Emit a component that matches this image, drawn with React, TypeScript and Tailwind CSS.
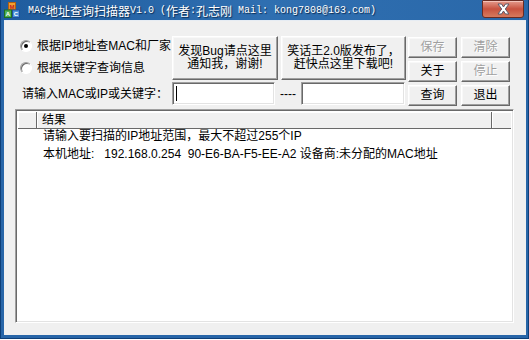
import React from "react";

const CJK = "font-['Liberation_Sans','Noto_Sans_CJK_SC',sans-serif]";

function Btn({
  children,
  className = "",
  disabled = false,
}: {
  children: React.ReactNode;
  className?: string;
  disabled?: boolean;
}) {
  return (
    <div
      className={`bg-[#f0f0f0] border border-t-white border-l-white border-b-[#696969] border-r-[#696969] shadow-[inset_-1px_-1px_0_#a0a0a0,inset_1px_1px_0_#f8f8f8] flex flex-col items-center justify-center text-[12px] leading-[13px] ${
        disabled ? "text-[#a0a0a0] [text-shadow:1px_1px_0_#ffffff]" : "text-black"
      } ${className}`}
    >
      {children}
    </div>
  );
}

function Field({ caret = false, className = "" }: { caret?: boolean; className?: string }) {
  return (
    <div
      className={`h-[23px] bg-white border border-t-[#a0a0a0] border-l-[#a0a0a0] border-b-white border-r-white shadow-[inset_1px_1px_0_#696969,inset_-1px_-1px_0_#e3e3e3] flex items-center pl-[3px] ${className}`}
    >
      {caret && <div className="w-[1px] h-[15px] bg-black" />}
    </div>
  );
}

function Radio({ checked, label }: { checked?: boolean; label: string }) {
  return (
    <div className="h-[20px] flex items-center">
      <div className="w-[12px] h-[12px] rounded-full bg-white border border-t-[#a0a0a0] border-l-[#a0a0a0] border-b-white border-r-white shadow-[inset_1px_1px_0_#696969] flex items-center justify-center">
        {checked && <div className="w-[4px] h-[4px] rounded-full bg-black" />}
      </div>
      <span className="ml-[5px] text-[12px] leading-[14px] whitespace-nowrap">{label}</span>
    </div>
  );
}

function AppIcon() {
  return (
    <svg width="16" height="16" viewBox="0 0 16 16">
      <rect x="4.5" y="0.5" width="7" height="7" fill="#f0a030" stroke="#b06010" />
      <text x="8" y="6.5" fontSize="6" textAnchor="middle" fill="#c02020" fontFamily="Liberation Sans" fontWeight="bold">M</text>
      <rect x="0.5" y="8" width="7" height="7.5" fill="#50b050" stroke="#207020" />
      <rect x="8.5" y="8" width="7" height="7.5" fill="#4a90d8" stroke="#2050a0" />
      <text x="4" y="14" fontSize="6" textAnchor="middle" fill="#ffffff" fontFamily="Liberation Sans" fontWeight="bold">A</text>
      <text x="12" y="14" fontSize="6" textAnchor="middle" fill="#ffffff" fontFamily="Liberation Sans" fontWeight="bold">C</text>
    </svg>
  );
}

function CloseBtn() {
  return (
    <div className="w-[42px] h-[18px] rounded-b-[3px] rounded-t-[1px] border border-[#6a2b22] bg-gradient-to-b from-[#e49a8c] via-[#c8523f] to-[#d67a5e] flex items-center justify-center shadow-[inset_0_1px_0_#f3c2b8]">
      <svg width="15" height="12" viewBox="0 0 15 12">
        <path
          d="M2 1 L5.5 1 L7.5 4 L9.5 1 L13 1 L9.3 6 L13 11 L9.5 11 L7.5 8 L5.5 11 L2 11 L5.7 6 Z"
          fill="#ffffff"
          stroke="#5a5a6a"
          strokeWidth="1"
          strokeLinejoin="round"
        />
      </svg>
    </div>
  );
}

const mono = "font-['Liberation_Mono',monospace] text-[10px]";
const cj = "font-['Noto_Sans_CJK_SC',sans-serif] text-[12px]";

export default function App() {
  return (
    <div className={`w-[529px] h-[340px] bg-white ${CJK}`}>
      <div className="w-[529px] h-[339px] flex flex-col bg-[#2866a8] border-l border-r border-b border-[#0e3f78]">
        {/* Title bar */}
        <div className="h-[20px] flex items-center bg-gradient-to-r from-[#1f5c9e] via-[#2f6fb1] to-[#2a68a9] pl-[3px] pr-[4px]">
          <AppIcon />
          <div className="ml-[8px] flex items-center text-white [text-shadow:1px_1px_1px_#0a2a50] whitespace-pre leading-[14px] mt-[1px]">
            <span className={mono}>MAC</span>
            <span className={cj}>地址查询扫描器</span>
            <span className={mono}>V1.0 (</span>
            <span className={cj}>作者</span>
            <span className={mono}>:</span>
            <span className={cj}>孔志刚</span>
            <span className={mono}> Mail: kong7808@163.com)</span>
          </div>
          <div className="ml-auto self-start">
            <CloseBtn />
          </div>
        </div>
        {/* Client */}
        <div className="flex-1 ml-[3px] mr-[2px] mb-[3px] bg-[#f0f0f0] border-t border-[#e6ecf3] flex flex-col text-black">
          <div className="flex mt-[15px] ml-[16px]">
            <div className="flex flex-col">
              <div className="flex h-[44px]">
                <div className="w-[152px] flex flex-col gap-[2px]">
                  <Radio checked label="根据IP地址查MAC和厂家" />
                  <Radio label="根据关键字查询信息" />
                </div>
                <Btn className="w-[106px] h-[44px]">
                  <span>发现Bug请点这里</span>
                  <span>通知我，谢谢!</span>
                </Btn>
                <Btn className="w-[125px] h-[44px] ml-[3px]">
                  <span>笑话王2.0版发布了，</span>
                  <span>赶快点这里下载吧!</span>
                </Btn>
              </div>
              <div className="flex items-center mt-[2px]">
                <div className="w-[152px] pl-[2px] text-[12px] leading-[14px] whitespace-nowrap">请输入MAC或IP或关键字：</div>
                <Field caret className="w-[103px]" />
                <div className="w-[26px] text-center text-[12px] leading-[14px]">----</div>
                <Field className="w-[104px]" />
              </div>
            </div>
            <div className="ml-[2px] mt-[1px] grid grid-cols-[49px_49px] gap-x-[4px] gap-y-[3px]">
              <Btn disabled className="h-[21px]">保存</Btn>
              <Btn disabled className="h-[21px]">清除</Btn>
              <Btn className="h-[21px]">关于</Btn>
              <Btn disabled className="h-[21px]">停止</Btn>
              <Btn className="h-[21px]">查询</Btn>
              <Btn className="h-[21px]">退出</Btn>
            </div>
          </div>
          {/* List */}
          <div className="flex-1 mt-[3px] ml-[11px] mr-[12px] mb-[12px] bg-white border border-t-[#a0a0a0] border-l-[#a0a0a0] border-b-white border-r-white shadow-[inset_1px_1px_0_#696969,inset_-1px_-1px_0_#e3e3e3] p-[2px] flex flex-col">
            <div className="h-[17px] flex bg-[#f0f0f0] text-[12px]">
              <div className="w-[19px] border-r border-b border-r-[#696969] border-b-[#696969] shadow-[inset_1px_1px_0_#ffffff]" />
              <div className="w-[455px] border-r border-b border-r-[#696969] border-b-[#696969] shadow-[inset_1px_1px_0_#ffffff] pl-[5px] leading-[16px]">结果</div>
              <div className="flex-1 border-b border-b-[#696969] shadow-[inset_1px_1px_0_#ffffff]" />
            </div>
            <div className="pl-[25px] text-[12px] whitespace-pre">
              <div className="h-[18px] leading-[14px]">请输入要扫描的IP地址范围，最大不超过255个IP</div>
              <div className="h-[18px] leading-[14px]">本机地址:   192.168.0.254  90-E6-BA-F5-EE-A2 设备商:未分配的MAC地址</div>
            </div>
          </div>
        </div>
      </div>
    </div>
  );
}
